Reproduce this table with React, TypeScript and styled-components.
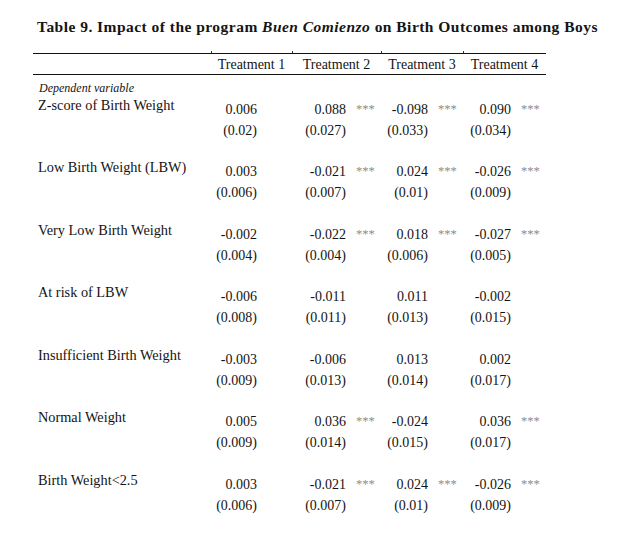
import React, { FC } from 'react';
import styled, { createGlobalStyle } from 'styled-components';

const GlobalStyle = createGlobalStyle`
  html, body {
    margin: 0;
    padding: 0;
    background: #fff;
  }
  body {
    font-family: 'Liberation Serif', 'Times New Roman', serif;
    color: #141414;
  }
`;

const Page = styled.div`
  padding: 17px 0 0 33px;
  width: 588px;
`;

const Title = styled.h1`
  margin: 0 0 16px 4px;
  font-size: 15.5px;
  line-height: 20px;
  font-weight: bold;
  letter-spacing: 0.47px;
  white-space: nowrap;

  em {
    font-style: italic;
  }
`;

const columns = '178px 81px 89px 82px 83px';

const Table = styled.div`
  width: 513px;
`;

const HeaderRow = styled.div`
  display: grid;
  grid-template-columns: ${columns};
  border-top: 1px solid #111;
  border-bottom: 1px solid #111;
  padding-top: 1px;
  box-sizing: border-box;
  height: 22px;
`;

const HeaderCell = styled.div`
  position: relative;
  font-size: 14px;
  line-height: 19px;
  text-align: center;
  white-space: nowrap;

  &::before {
    content: '';
    position: absolute;
    left: 0;
    top: -4px;
    width: 1px;
    height: 2px;
    background: #333;
  }
`;

const SectionLabel = styled.div`
  padding: 5.5px 0 0 6px;
  font-size: 12px;
  line-height: 14px;
  font-style: italic;
`;

const Row = styled.div`
  display: grid;
  grid-template-columns: ${columns};
  padding-bottom: 16.5px;
`;

const Label = styled.div`
  padding-left: 5px;
  font-size: 14.3px;
  line-height: 21px;
  white-space: nowrap;
`;

const ValueCell = styled.div`
  display: grid;
  grid-template-columns: 1fr 35px;
  padding-top: 4px;
  font-size: 14px;
  line-height: 21px;
`;

const Num = styled.span`
  text-align: right;
  white-space: nowrap;
`;

const Stars = styled.span`
  padding-left: 10px;
  font-size: 12.5px;
  color: #8c8c8c;
  white-space: nowrap;
`;

type Estimate = {
  coef: string;
  se: string;
  sig?: boolean;
};

type Outcome = {
  label: string;
  values: Estimate[];
};

const outcomes: Outcome[] = [
  {
    label: 'Z-score of Birth Weight',
    values: [
      { coef: '0.006', se: '(0.02)' },
      { coef: '0.088', se: '(0.027)', sig: true },
      { coef: '-0.098', se: '(0.033)', sig: true },
      { coef: '0.090', se: '(0.034)', sig: true },
    ],
  },
  {
    label: 'Low Birth Weight (LBW)',
    values: [
      { coef: '0.003', se: '(0.006)' },
      { coef: '-0.021', se: '(0.007)', sig: true },
      { coef: '0.024', se: '(0.01)', sig: true },
      { coef: '-0.026', se: '(0.009)', sig: true },
    ],
  },
  {
    label: 'Very Low Birth Weight',
    values: [
      { coef: '-0.002', se: '(0.004)' },
      { coef: '-0.022', se: '(0.004)', sig: true },
      { coef: '0.018', se: '(0.006)', sig: true },
      { coef: '-0.027', se: '(0.005)', sig: true },
    ],
  },
  {
    label: 'At risk of LBW',
    values: [
      { coef: '-0.006', se: '(0.008)' },
      { coef: '-0.011', se: '(0.011)' },
      { coef: '0.011', se: '(0.013)' },
      { coef: '-0.002', se: '(0.015)' },
    ],
  },
  {
    label: 'Insufficient Birth Weight',
    values: [
      { coef: '-0.003', se: '(0.009)' },
      { coef: '-0.006', se: '(0.013)' },
      { coef: '0.013', se: '(0.014)' },
      { coef: '0.002', se: '(0.017)' },
    ],
  },
  {
    label: 'Normal Weight',
    values: [
      { coef: '0.005', se: '(0.009)' },
      { coef: '0.036', se: '(0.014)', sig: true },
      { coef: '-0.024', se: '(0.015)' },
      { coef: '0.036', se: '(0.017)', sig: true },
    ],
  },
  {
    label: 'Birth Weight<2.5',
    values: [
      { coef: '0.003', se: '(0.006)' },
      { coef: '-0.021', se: '(0.007)', sig: true },
      { coef: '0.024', se: '(0.01)', sig: true },
      { coef: '-0.026', se: '(0.009)', sig: true },
    ],
  },
];

const treatments = ['Treatment 1', 'Treatment 2', 'Treatment 3', 'Treatment 4'];

const App: FC = () => (
  <>
    <GlobalStyle />
    <Page>
      <Title>
        Table 9. Impact of the program <em>Buen Comienzo</em> on Birth Outcomes among Boys
      </Title>
      <Table>
        <HeaderRow>
          <div />
          {treatments.map((t) => (
            <HeaderCell key={t}>{t}</HeaderCell>
          ))}
        </HeaderRow>
        <SectionLabel>Dependent variable</SectionLabel>
        {outcomes.map((o) => (
          <Row key={o.label}>
            <Label>{o.label}</Label>
            {o.values.map((v, i) => (
              <ValueCell key={i}>
                <Num>{v.coef}</Num>
                <Stars>{v.sig ? '***' : ''}</Stars>
                <Num>{v.se}</Num>
                <span />
              </ValueCell>
            ))}
          </Row>
        ))}
      </Table>
    </Page>
  </>
);

export default App;
